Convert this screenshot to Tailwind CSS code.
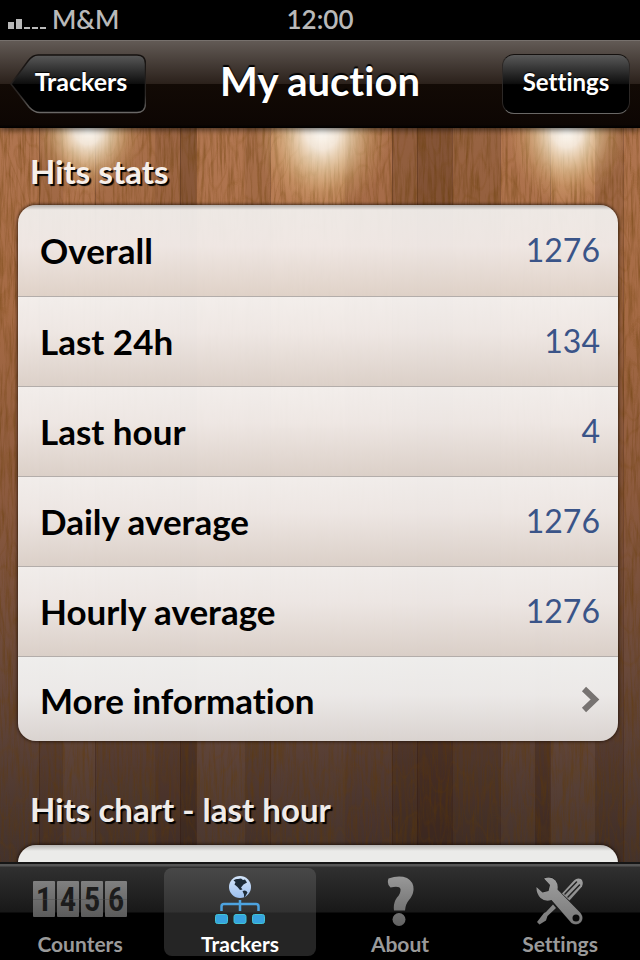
<!DOCTYPE html>
<html lang="en">
<head>
    <meta charset="UTF-8">
    <meta name="viewport" content="width=device-width, initial-scale=1.0">
    <title>My auction</title>
    <script src="https://cdn.jsdelivr.net/npm/@tailwindcss/browser@4"></script>
</head>
<body class="bg-black font-['Lato','Liberation_Sans',sans-serif] [font-variant-ligatures:none]">
    <div class="h-screen flex flex-col overflow-hidden">

        <!-- Status bar -->
        <div class="h-10 shrink-0 grid grid-cols-3 items-center px-2 pb-0.5 text-[#b9b9b9] text-[26px] leading-8 font-semibold">
            <div class="flex items-center gap-1">
                <svg class="w-10 h-5" viewBox="0 0 40 20" fill="#b9b9b9" aria-hidden="true">
                    <rect x="0" y="13" width="6" height="7"/>
                    <rect x="8" y="10" width="6" height="10"/>
                    <rect x="16" y="18" width="6" height="2"/>
                    <rect x="24" y="18" width="6" height="2"/>
                    <rect x="32" y="18" width="6" height="2"/>
                </svg>
                <span>M&amp;M</span>
            </div>
            <span class="text-center">12:00</span>
        </div>

        <!-- Navigation bar -->
        <header class="relative z-10 h-22 shrink-0 grid grid-cols-[1fr_auto_1fr] items-center px-2.5 pb-0.5 border-t border-[#77716d] text-white bg-[linear-gradient(#625a55,#2b211b_49%,#120a05_50%,#0d0603_96%,#000)] shadow-[0_2px_6px_rgba(0,0,0,0.6)]">
            <a href="#trackers" class="relative justify-self-start w-[136px] h-[60px] flex items-center justify-center pl-1.5 pb-1 text-[25px] font-bold [text-shadow:0_-1px_1px_#000]">
                <svg class="absolute inset-0 w-full h-full" viewBox="0 0 136 60" aria-hidden="true">
                    <defs>
                        <linearGradient id="btn" x2="0" y2="1">
                            <stop offset="0" stop-color="#595959"/>
                            <stop offset=".5" stop-color="#0d0d0d"/>
                            <stop offset=".51" stop-color="#000"/>
                            <stop offset="1" stop-color="#000"/>
                        </linearGradient>
                        <linearGradient id="btnEdge" x2="0" y2="1">
                            <stop offset="0" stop-color="#14100e"/>
                            <stop offset=".7" stop-color="#2c2826"/>
                            <stop offset="1" stop-color="#6a6866"/>
                        </linearGradient>
                    </defs>
                    <path d="M1 30 18 7Q22.500 1 28 1H127Q135.500 1 135.500 10V49Q135.500 58.500 127 58.500H30Q24 58.500 19 53Z" fill="url(#btn)" stroke="url(#btnEdge)" stroke-width="1.500"/>
                </svg>
                <span class="relative">Trackers</span>
            </a>
            <h1 class="pb-1.5 text-[40px] leading-12 font-bold [text-shadow:0_-2px_1px_#000]">My auction</h1>
            <button type="button" class="justify-self-end w-32 h-[60px] pb-1 rounded-xl border border-t-[#14100e] border-x-[#2c2826] border-b-[#6a6866] bg-[linear-gradient(#595959,#0d0d0d_50%,#000_51%)] text-2xl font-bold [text-shadow:0_-1px_1px_#000]">Settings</button>
        </header>

        <main class="relative flex-1 min-h-0 overflow-hidden">
            <!-- Wooden wall with three lamps -->
            <svg class="absolute inset-0 w-full h-full" viewBox="0 0 640 734" preserveAspectRatio="none" aria-hidden="true">
                <defs>
                    <linearGradient id="wood" x2="0" y2="1">
                        <stop offset="0" stop-color="#b07550"/>
                        <stop offset=".25" stop-color="#a56a44"/>
                        <stop offset=".5" stop-color="#8c5a3e"/>
                        <stop offset=".72" stop-color="#6c4a3a"/>
                        <stop offset=".85" stop-color="#583f35"/>
                        <stop offset="1" stop-color="#43322c"/>
                    </linearGradient>
                    <radialGradient id="lamp">
                        <stop offset="0" stop-color="#fffefa"/>
                        <stop offset=".25" stop-color="#fffaf0" stop-opacity=".85"/>
                        <stop offset=".5" stop-color="#fff0c8" stop-opacity=".5"/>
                        <stop offset=".75" stop-color="#ffe0a0" stop-opacity=".18"/>
                        <stop offset="1" stop-color="#ffd090" stop-opacity="0"/>
                    </radialGradient>
                    <filter id="grain" x="0" y="0" width="100%" height="100%">
                        <feTurbulence type="fractalNoise" baseFrequency=".35 .025" numOctaves="4" seed="7"/>
                        <feColorMatrix values="0 0 0 0 .12  0 0 0 0 .04  0 0 0 0 0  2.400 0 0 0 -1.050"/>
                    </filter>
                    <filter id="swirl" x="0" y="0" width="100%" height="100%">
                        <feTurbulence type="fractalNoise" baseFrequency=".04 .014" numOctaves="2" seed="3"/>
                        <feComponentTransfer>
                            <feFuncR type="table" tableValues="0 0 0 1 0 0 1 0 0 1 0 0 1 0 0 1 0 0 0"/>
                        </feComponentTransfer>
                        <feColorMatrix values="0 0 0 0 .15  0 0 0 0 .05  0 0 0 0 0  1 0 0 0 -.45"/>
                    </filter>
                </defs>
                <rect width="640" height="734" fill="url(#wood)"/>
                <g fill="#200a00">
                    <rect x="39" width="24" height="734" opacity=".08"/>
                    <rect x="95" width="60" height="734" opacity=".05"/>
                    <rect x="155" width="25" height="734" opacity=".12"/>
                    <rect x="180" width="16" height="734" opacity=".26"/>
                    <rect x="245" width="25" height="734" opacity=".06"/>
                    <rect x="345" width="47" height="734" opacity=".04"/>
                    <rect x="392" width="25" height="734" opacity=".2"/>
                    <rect x="417" width="35" height="734" opacity=".3"/>
                    <rect x="452" width="48" height="734" opacity=".16"/>
                    <rect x="535" y="500" width="15" height="234" opacity=".22"/>
                    <rect x="595" width="28" height="734" opacity=".1"/>
                </g>
                <g fill="#ffc890">
                    <rect x="63" width="32" height="734" opacity=".03"/>
                    <rect x="197" width="48" height="734" opacity=".03"/>
                    <rect x="270" width="75" height="300" opacity=".12"/>
                    <rect x="550" width="45" height="300" opacity=".12"/>
                    <rect x="550" y="300" width="45" height="434" opacity=".03"/>
                </g>
                <path d="M39.500 0V734M95.500 0V734M180.500 0V734M196.500 0V734M270.500 0V734M392.500 0V734M417.500 0V734M452.500 0V734M500.500 0V734M550.500 0V734M623.500 0V734" stroke="#2a1006" stroke-opacity=".25" fill="none"/>
                <rect width="640" height="734" filter="url(#swirl)" opacity=".25"/>
                <rect width="640" height="734" filter="url(#grain)" opacity=".4"/>
                <ellipse cx="88" cy="0" rx="56" ry="66" fill="url(#lamp)"/>
                <ellipse cx="322" cy="0" rx="68" ry="86" fill="url(#lamp)"/>
                <ellipse cx="567" cy="0" rx="60" ry="78" fill="url(#lamp)"/>
            </svg>

            <div class="relative pl-[18px] pr-[22px] pt-[23px]">
                <h2 class="pl-3 text-[33px] leading-10 font-bold text-[#f6efea] [text-shadow:2px_2px_1px_#000]">Hits stats</h2>

                <div class="mt-3.5 rounded-[18px] overflow-hidden shadow-[0_0_3px_1px_rgba(30,15,8,0.7)] text-[35px] leading-10">
                    <dl class="text-[#3a5488]">
                        <div class="h-[92px] flex items-center justify-between pl-[22px] pr-[18px] pb-0.5 border-b border-[#b3adaa] bg-[linear-gradient(#b5afac,rgba(242,240,238,0.94)_5px,rgba(243,237,235,0.95)_45%,rgba(226,214,205,0.96))]">
                            <dt class="font-bold text-black">Overall</dt>
                            <dd class="text-[32px]">1276</dd>
                        </div>
                        <div class="h-[90px] flex items-center justify-between pl-[22px] pr-[18px] pb-0.5 border-b border-[#b3adaa] bg-[linear-gradient(rgba(247,245,244,0.95),rgba(243,238,236,0.95)_40%,rgba(223,213,206,0.96))]">
                            <dt class="font-bold text-black">Last 24h</dt>
                            <dd class="text-[32px]">134</dd>
                        </div>
                        <div class="h-[90px] flex items-center justify-between pl-[22px] pr-[18px] pb-0.5 border-b border-[#b3adaa] bg-[linear-gradient(rgba(247,245,244,0.95),rgba(243,238,236,0.95)_40%,rgba(223,213,206,0.96))]">
                            <dt class="font-bold text-black">Last hour</dt>
                            <dd class="text-[32px]">4</dd>
                        </div>
                        <div class="h-[90px] flex items-center justify-between pl-[22px] pr-[18px] pb-0.5 border-b border-[#b3adaa] bg-[linear-gradient(rgba(247,245,244,0.95),rgba(243,238,236,0.95)_40%,rgba(223,213,206,0.96))]">
                            <dt class="font-bold text-black">Daily average</dt>
                            <dd class="text-[32px]">1276</dd>
                        </div>
                        <div class="h-[90px] flex items-center justify-between pl-[22px] pr-[18px] pb-0.5 border-b border-[#b3adaa] bg-[linear-gradient(rgba(247,245,244,0.95),rgba(243,238,236,0.95)_40%,rgba(223,213,206,0.96))]">
                            <dt class="font-bold text-black">Hourly average</dt>
                            <dd class="text-[32px]">1276</dd>
                        </div>
                    </dl>
                    <a href="#more" class="h-[84px] flex items-center justify-between pl-[22px] pr-[18px] pt-0.5 font-bold text-black bg-[linear-gradient(rgba(243,243,242,0.97),rgba(240,238,237,0.97)_45%,rgba(222,216,213,0.97))]">
                        More information
                        <svg class="w-5 h-7" viewBox="0 0 20 28" fill="none" stroke="#777371" stroke-width="6" aria-hidden="true">
                            <path d="M4 3 15 13.500 4 24"/>
                        </svg>
                    </a>
                </div>

                <h2 class="mt-12 pl-3 text-[33px] leading-10 font-bold text-[#efebe9] [text-shadow:2px_2px_1px_#000]">Hits chart - last hour</h2>
                <div class="mt-4 h-60 rounded-[18px] bg-[linear-gradient(#b5b3b1,#ebebe9_6px)] shadow-[0_0_3px_1px_rgba(20,10,5,0.7)]"></div>
            </div>
        </main>

        <!-- Tab bar -->
        <nav class="relative h-[98px] shrink-0 grid grid-cols-4 gap-2 px-1 pt-1 pb-1 border-t-2 border-[#161616] bg-[linear-gradient(#555_0,#555_2px,#303030_3px,#181818_48px,#000_49px)] text-[21px] leading-6 font-bold text-[#9a9a9a]">
            <a href="#counters" class="h-22 flex flex-col items-center justify-between pt-2">
                <svg class="w-[94px] h-[42px] mt-1" viewBox="0 0 94 42" aria-hidden="true">
                    <defs>
                        <linearGradient id="metal" gradientUnits="userSpaceOnUse" x1="0" y1="0" x2="0" y2="42">
                            <stop offset="0" stop-color="#818181"/>
                            <stop offset="1" stop-color="#565656"/>
                        </linearGradient>
                    </defs>
                    <g fill="url(#metal)">
                        <rect x="0" y="1" width="22" height="36" rx="1"/>
                        <rect x="24" y="1" width="22" height="36" rx="1"/>
                        <rect x="48" y="1" width="22" height="36" rx="1"/>
                        <rect x="72" y="1" width="22" height="36" rx="1"/>
                    </g>
                    <g font-family="'Roboto Condensed', 'Liberation Sans Narrow', Roboto, sans-serif" font-size="33" font-weight="600" fill="#1c1c1c" text-anchor="middle">
                        <text x="11" y="31">1</text>
                        <text x="35" y="31">4</text>
                        <text x="59" y="31">5</text>
                        <text x="83" y="31">6</text>
                    </g>
                    <path d="M0 19.500H94" stroke="#4a4a4a" stroke-opacity=".4"/>
                </svg>
                <span>Counters</span>
            </a>
            <a href="#trackers" aria-current="page" class="h-22 flex flex-col items-center justify-between pt-2 rounded-lg bg-[linear-gradient(#484848,#323232_44px,#252525_45px)] text-white">
                <svg class="w-[52px] h-[52px]" viewBox="0 0 52 52" aria-hidden="true">
                    <defs>
                        <linearGradient id="globe" x2="0" y2="1">
                            <stop offset="0" stop-color="#d5e6fb"/>
                            <stop offset="1" stop-color="#9dc0f0"/>
                        </linearGradient>
                    </defs>
                    <circle cx="26" cy="11" r="11" fill="url(#globe)"/>
                    <path d="M19.500 4.500Q21 2.500 24 3L27 2.500 29 4 31 3.500 33 6.500 29.500 8.500 27 11.500 28.500 13.500 26 14 23.500 11 20.500 8.500 21.500 6ZM28.500 15Q32 13.500 33.500 16.500L31.500 20 30 21.500 30 18.500Z" fill="#1d2b38"/>
                    <path d="M26 24V35M7.500 35V30.500Q7.500 28 10 28H42Q44.500 28 44.500 30.500V35" fill="none" stroke="#4da3e0" stroke-width="2.500"/>
                    <g fill="#37a3df" stroke="#41c4d4" stroke-width="1">
                        <rect x="1.500" y="38.500" width="12" height="9" rx="2"/>
                        <rect x="20" y="38.500" width="12" height="9" rx="2"/>
                        <rect x="38.500" y="38.500" width="12" height="9" rx="2"/>
                    </g>
                </svg>
                <span>Trackers</span>
            </a>
            <a href="#about" class="h-22 flex flex-col items-center justify-between pt-2">
                <svg class="w-[30px] h-[52px]" viewBox="0 0 30 52" aria-hidden="true">
                    <defs>
                        <linearGradient id="mark" gradientUnits="userSpaceOnUse" x1="0" y1="0" x2="0" y2="52">
                            <stop offset="0" stop-color="#999"/>
                            <stop offset="1" stop-color="#606060"/>
                        </linearGradient>
                    </defs>
                    <path d="M3.500 2.500Q14 -1 22 2Q29 6 28.500 14Q28 19.500 24 24Q20.500 28 20 34.500H9Q8 27 12 21.500Q16 17 15.500 13Q14.500 9.500 5.500 11.500Q1.500 8 3.500 2.500Z" fill="url(#mark)"/>
                    <circle cx="14" cy="43.500" r="6.500" fill="url(#mark)"/>
                </svg>
                <span>About</span>
            </a>
            <a href="#settings" class="h-22 flex flex-col items-center justify-between pt-2">
                <svg class="w-12 h-[52px]" viewBox="0 0 48 52" aria-hidden="true">
                    <defs>
                        <linearGradient id="tool" gradientUnits="userSpaceOnUse" x1="0" y1="0" x2="0" y2="50">
                            <stop offset="0" stop-color="#a0a0a0"/>
                            <stop offset="1" stop-color="#777"/>
                        </linearGradient>
                    </defs>
                    <path d="M26 17.500 38 4.500Q41 1.500 45 3Q48 6 46 10.500L33.500 24.500Z" fill="url(#tool)"/>
                    <path d="M29 18 40.500 6M32 21 43.500 9" stroke="#222" stroke-width="1.500" stroke-linecap="round"/>
                    <path d="M17 28.500 10 36 8 37 1 46 3.500 48.500 10 44.500 11.500 40 20 32Z" fill="url(#tool)"/>
                    <path d="M8 2.500Q15 -.500 19.500 4.500Q22.500 8.500 21.500 13.500L44.500 37Q48 42 45 46Q41 50 35.500 47L15.500 24Q9 26 4.500 22Q0 17 .500 11L6.500 16.500 12.500 15 14 9Z" fill="url(#tool)" stroke="#161616" stroke-width="1" paint-order="stroke"/>
                    <circle cx="40" cy="42" r="3.500" fill="#0b0b0b"/>
                </svg>
                <span>Settings</span>
            </a>
        </nav>
    </div>
</body>
</html>
